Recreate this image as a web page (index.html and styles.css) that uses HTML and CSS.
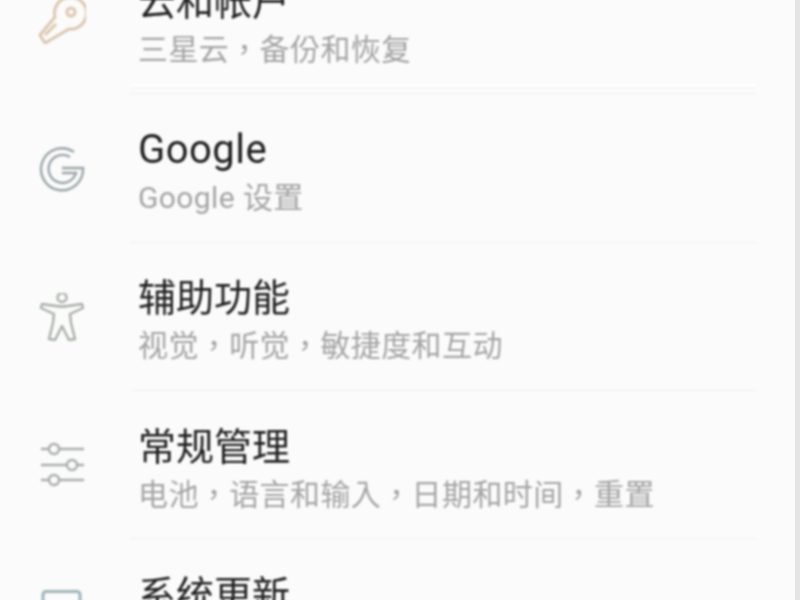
FILE: index.html
```html
<!DOCTYPE html>
<html lang="zh-CN">
<head>
  <meta charset="UTF-8">
  <title>设置</title>
  <link rel="stylesheet" href="styles.css">
</head>
<body>
  <ul class="settings">
    <li class="row row-first">
      <svg class="icon" viewBox="0 0 48 48" fill="none" stroke="#dcc7b0" stroke-width="3" stroke-linejoin="round">
        <path d="M2 39 L17 21 A16 16 0 1 1 31 33 L7 47 Z"/>
        <circle cx="33" cy="16" r="4"/>
        <path d="M7 39 L18 28"/>
      </svg>
      <div class="text">
        <div class="title">云和帐户</div>
        <div class="sub" lang="zh-Hant">三星云，备份和恢复</div>
      </div>
    </li>
    <li class="row">
      <svg class="icon" viewBox="0 0 48 48" fill="none" stroke="#9aa5a8" stroke-width="2.4">
        <path d="M36 8 A21 21 0 1 0 45 24 L24 24"/>
        <path d="M32 13 A14 14 0 1 0 38 29 L24 29"/>
      </svg>
      <div class="text">
        <div class="title title-latin">Google</div>
        <div class="sub" lang="zh-Hant">Google 设置</div>
      </div>
    </li>
    <li class="row">
      <svg class="icon" viewBox="0 0 48 48" fill="none" stroke="#a9b0a8" stroke-width="2.4" stroke-linejoin="round">
        <circle cx="24" cy="4.5" r="4.5"/>
        <path d="M4 11 L18 13 Q24 14 30 13 L44 11 L45 15 L32 21 L33 30 L37 46 L31 47 L24 33 L17 47 L11 46 L15 30 L16 21 L3 15 Z"/>
      </svg>
      <div class="text">
        <div class="title">辅助功能</div>
        <div class="sub" lang="zh-Hant">视觉，听觉，敏捷度和互动</div>
      </div>
    </li>
    <li class="row">
      <svg class="icon" viewBox="0 0 48 48" fill="none" stroke="#a9aeaa" stroke-width="2.4">
        <path d="M3 8 H11 M21 8 H46 M3 24 H29 M39 24 H46 M3 39 H11 M21 39 H46"/>
        <circle cx="16" cy="8" r="5"/>
        <circle cx="34" cy="24" r="5"/>
        <circle cx="16" cy="39" r="5"/>
      </svg>
      <div class="text">
        <div class="title">常规管理</div>
        <div class="sub" lang="zh-Hant">电池，语言和输入，日期和时间，重置</div>
      </div>
    </li>
    <li class="row">
      <svg class="icon" viewBox="0 0 48 48" fill="none" stroke="#9fb4ba" stroke-width="3">
        <rect x="5" y="2.5" width="37" height="40" rx="3"/>
      </svg>
      <div class="text">
        <div class="title">系统更新</div>
        <div class="sub" lang="zh-Hant">下载更新</div>
      </div>
    </li>
  </ul>
</body>
</html>
```

FILE: styles.css
```css
html, body {
  margin: 0;
  height: 600px;
  overflow: hidden;
  background: #fbfbfb;
}
body {
  font-family: Roboto, "Noto Sans CJK SC", sans-serif;
  border-right: 5px solid #e4e4e4;
  box-sizing: border-box;
}
.settings {
  list-style: none;
  margin: -54px 0 0;
  padding: 0 38px 0 0;
  filter: blur(0.8px);
}
.row {
  display: flex;
  align-items: center;
  gap: 44px;
  height: 148.33px;
  padding-left: 38px;
  box-sizing: border-box;
}
.icon {
  flex: none;
  width: 48px;
  height: 48px;
}
.text {
  flex: 1;
  align-self: stretch;
  display: flex;
  flex-direction: column;
  justify-content: center;
  gap: 6px;
  padding: 10px 0 0 8px;
  border-bottom: 1px solid #efefef;
  box-sizing: border-box;
}
.row-first .text {
  box-shadow: inset 0 -5px 0 #fbfbfb, inset 0 -6px 0 #f1f1f1, inset 0 -9px 0 #ffffff;
}
.title {
  font-size: 38px;
  line-height: 44px;
  color: #202020;
}
.title-latin {
  font-size: 40px;
  letter-spacing: 0.5px;
}
.sub {
  font-family: Roboto, "Noto Sans CJK TC", sans-serif;
  font-size: 30px;
  line-height: 40px;
  letter-spacing: 0.4px;
  color: #a4a4a4;
}
```
